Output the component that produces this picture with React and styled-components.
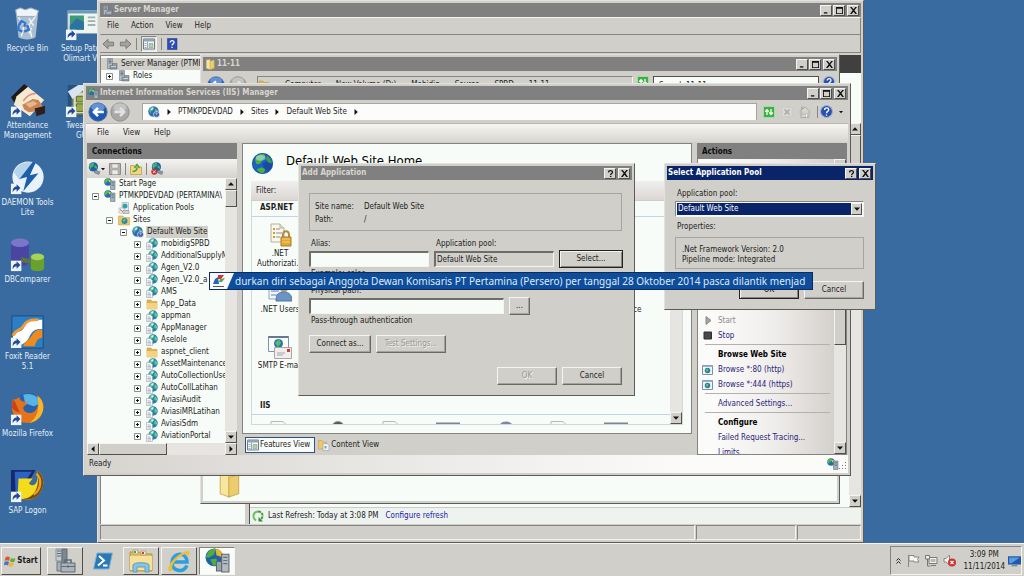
import React from 'react'
import { useState } from 'react'
import styled, { createGlobalStyle, css, ThemeProvider } from 'styled-components'

const theme = {
  desktop: '#396ba0',
  face: '#d1cfc9',
  light: '#f5f4f1',
  shadow: '#858480',
  dark: '#4f4f4c',
  paper: '#f8fcf8',
  caption: '#808080',
  captionText: '#d8d5ce',
  active: '#0a246a',
  text: '#1c1c1c',
  link: '#2a2478',
}

const GlobalStyle = createGlobalStyle`
  * { box-sizing: border-box; }
  html, body, #root { height: 100%; }
  body {
    margin: 0;
    overflow: hidden;
    font-family: 'DejaVu Sans Condensed', 'DejaVu Sans', Tahoma, sans-serif;
    font-size: 8px;
    line-height: 12px;
    color: ${theme.text};
  }
  button, input, select {
    font: inherit;
    color: inherit;
    margin: 0;
    padding: 0;
    border: 0;
    border-radius: 0;
    background: none;
    outline: none;
  }
  svg { display: block; flex: none; }
`

const raised = css`
  border: 1px solid;
  border-color: ${({ theme }) => `${theme.light} ${theme.dark} ${theme.dark} ${theme.light}`};
  background: ${({ theme }) => theme.face};
`

const sunken = css`
  border: 1px solid;
  border-color: ${({ theme }) => `${theme.shadow} ${theme.light} ${theme.light} ${theme.shadow}`};
`

const Screen = styled.div`
  position: relative;
  display: flex;
  flex-direction: column;
  height: 100vh;
  background: ${({ theme }) => theme.desktop};
  overflow: hidden;
`

const Desktop = styled.main`
  position: relative;
  flex: 1;
  min-height: 0;
`

/* desktop shortcuts */

const Shortcuts = styled.div`
  display: grid;
  grid-auto-flow: column;
  grid-template-rows: repeat(7, 77px);
  grid-auto-columns: 55px;
`

const Shortcut = styled.button`
  display: flex;
  flex-direction: column;
  align-items: center;
  justify-content: flex-start;
  padding-top: 6px;
  color: #e6eef6;
  line-height: 10px;
  white-space: pre;
`

const ShortcutIcon = styled.span`
  display: block;
  margin-bottom: 2px;
`

/* windows */

const Window = styled.section`
  position: absolute;
  left: ${({ $x }) => $x}px;
  top: ${({ $y }) => $y}px;
  width: ${({ $w }) => $w}px;
  height: ${({ $h }) => $h}px;
  display: flex;
  flex-direction: column;
  padding: 2px;
  border: 1px solid;
  border-color: #e4e2dd #5c5c5a #5c5c5a #e4e2dd;
  background: ${({ theme }) => theme.face};
`

const TitleBar = styled.header`
  display: flex;
  align-items: center;
  flex: none;
  height: 14px;
  padding: 0 2px 0 ${({ $icon }) => ($icon ? 2 : 1)}px;
  gap: 1px;
  background: ${({ theme, $active }) => ($active ? theme.active : theme.caption)};
  color: ${({ theme, $active }) => ($active ? '#fff' : theme.captionText)};
`

const TitleText = styled.h2`
  flex: 1;
  margin: 0;
  font-size: 8px;
  font-weight: bold;
  white-space: nowrap;
`

const CaptionButton = styled.button`
  ${raised}
  display: flex;
  align-items: center;
  justify-content: center;
  width: 12px;
  height: 11px;
  margin-left: ${({ $gap }) => ($gap ? 1 : 0)}px;
  color: #111;
`

const MenuBar = styled.nav`
  display: flex;
  align-items: center;
  flex: none;
  height: 18px;
  padding-left: 6px;
  gap: 12px;
`

const ServerMenuBar = styled(MenuBar)`
  ${sunken}
  border-color: ${({ theme }) => `${theme.light} ${theme.shadow} ${theme.shadow} ${theme.face}`};
`

const IisMenuBar = styled(MenuBar)`
  padding-left: 11px;
  gap: 14px;
  background: linear-gradient(#f6f5f2, #d9d6d1);
`

const MenuItem = styled.button`
  white-space: nowrap;
`

const ToolBar = styled.div`
  display: flex;
  align-items: center;
  flex: none;
  height: ${({ $h }) => $h || 18}px;
  padding: 0 3px;
  gap: 4px;
`

const ServerToolBar = styled(ToolBar)`
  padding: 0 2px;
  border-bottom: 1px solid ${({ theme }) => theme.shadow};
  border-right: 1px solid ${({ theme }) => theme.shadow};
`

const ToolButton = styled.button`
  display: flex;
  align-items: center;
  ${({ $boxed }) => $boxed && css`
    padding: 1px;
    ${sunken}
    background: #e6e4df;
  `}
`

const Divider = styled.span`
  width: 1px;
  height: 12px;
  background: ${({ theme }) => theme.shadow};
`

/* server manager body */

const ServerBody = styled.div`
  display: flex;
  flex: 1;
  min-height: 0;
  margin-top: 2px;
  gap: 4px;
`

const ServerTree = styled.div`
  flex: none;
  width: 145px;
  padding-top: 2px;
  border: 1px solid ${({ theme }) => theme.shadow};
  border-width: 1px 0 0 1px;
  background: ${({ theme }) => theme.paper};
`

const ServerPane = styled.div`
  display: flex;
  flex-direction: column;
  flex: 1;
  border-left: 1px solid ${({ theme }) => theme.dark};
  background: ${({ theme }) => theme.paper};
`

const ServerPaneHead = styled.div`
  height: 18px;
  margin-bottom: 50px;
  background: #404040;
`

const ServerPaneContent = styled.div`
  display: flex;
  justify-content: flex-end;
  flex: 1;
  min-height: 0;
`

const RefreshBar = styled.div`
  display: flex;
  align-items: center;
  flex: none;
  height: 17px;
  padding-left: 2px;
  gap: 4px;
  border-top: 1px solid #c6ccc6;
  background: #eff3ef;
`

const TextLink = styled.a`
  margin-left: ${({ $bright }) => ($bright ? 3 : 0)}px;
  color: ${({ $bright, theme }) => ($bright ? '#2020a8' : theme.link)};
  text-decoration: none;
`

const StatusCells = styled.div`
  display: grid;
  grid-template-columns: 1fr 100px 64px;
  gap: 1px;
  flex: none;
  height: 15px;
  margin-top: 1px;
`

const StatusCell = styled.div`
  ${sunken}
`

/* scroll bars */

const ScrollTrack = styled.div`
  display: flex;
  flex-direction: ${({ $horizontal }) => ($horizontal ? 'row' : 'column')};
  justify-content: space-between;
  flex: none;
  ${({ $horizontal }) => ($horizontal ? 'height: 12px;' : 'width: 12px;')}
  background: #e6e5e1;
`

const ScrollButton = styled.button`
  ${raised}
  display: flex;
  align-items: center;
  justify-content: center;
  flex: none;
  width: 12px;
  height: 12px;
`

const ScrollThumb = styled.div`
  ${raised}
  flex: none;
  ${({ $horizontal, $size }) => ($horizontal ? `width: ${$size}px;` : `height: ${$size}px;`)}
  ${({ $horizontal }) => ($horizontal ? 'margin-right: auto;' : 'margin-bottom: auto;')}
`

/* explorer */

const ExplorerNav = styled.div`
  display: flex;
  align-items: flex-start;
  flex: none;
  height: 26px;
  padding: 5px 2px 0 4px;
  gap: 4px;
`

const ExplorerAddress = styled.div`
  ${sunken}
  display: flex;
  align-items: center;
  flex: 1;
  height: 18px;
  margin-left: 6px;
  gap: 15px;
  overflow: hidden;
  white-space: nowrap;
`

const ExplorerSearch = styled.input`
  ${sunken}
  width: 166px;
  height: 18px;
  padding-left: 5px;
  border-color: ${({ theme }) => theme.dark};
  background: ${({ theme }) => theme.paper};
`

const ExplorerBody = styled.div`
  display: flex;
  flex-direction: column;
  justify-content: flex-end;
  flex: 1;
  padding: 0 0 3px 14px;
  background: ${({ theme }) => theme.paper};
`

const ExplorerDetails = styled.div`
  display: flex;
  align-items: flex-start;
  height: 32px;
  gap: 19px;
  svg { align-self: flex-end; }
`

/* iis */

const NavBar = styled.div`
  display: flex;
  align-items: center;
  flex: none;
  height: 24px;
  padding: 0 5px 0 2px;
  gap: 2px;
  border-bottom: 1px solid #b9b8b3;
`

const NavTools = styled.div`
  display: flex;
  align-items: center;
  gap: 6px;
  margin-left: 4px;
`

const AddressBar = styled.div`
  display: flex;
  align-items: center;
  flex: 1;
  height: 17px;
  margin-left: 10px;
  padding-left: 5px;
  gap: 6px;
  border: 1px solid #a5a5a2;
  border-width: 1px 1px 0 1px;
  background: #fcfdfb;
  white-space: nowrap;
`

const IisBody = styled.div`
  display: grid;
  grid-template-columns: 150px 1fr 150px;
  grid-template-rows: minmax(0, 1fr);
  column-gap: 5px;
  flex: 1;
  min-height: 0;
  padding: 1px 1px 0;
`

const Pane = styled.div`
  display: flex;
  flex-direction: column;
  min-width: 0;
  min-height: 0;
`

const PaneTitle = styled.h3`
  flex: none;
  height: 16px;
  margin: 0;
  padding: 2px 5px;
  background: ${({ theme }) => theme.caption};
  color: #0c0c0c;
  font-size: 8px;
  line-height: 13px;
`

const PaneTools = styled(ToolBar)`
  gap: 4px;
  padding: 0 1px;
  background: linear-gradient(#f4f3f1, #d6d3ce);
`

const TreeArea = styled.div`
  display: flex;
  flex: 1;
  min-height: 0;
  background: ${({ theme }) => theme.paper};
`

const TreeList = styled.ul`
  flex: 1;
  min-width: 0;
  margin: 0;
  padding: 0;
  overflow: hidden;
  list-style: none;
`

const TreeRow = styled.li`
  display: flex;
  align-items: center;
  height: 12px;
  padding-left: ${({ $level }) => 5 + $level * 14}px;
  white-space: nowrap;
  ${({ $wide, theme }) => $wide && `background: ${theme.face};`}
`

const Expander = styled.button`
  display: flex;
  flex: none;
  width: 12px;
  visibility: ${({ $empty }) => ($empty ? 'hidden' : 'visible')};
`

const TreeLabel = styled.span`
  padding: 0 1px;
  margin-left: 2px;
  background: ${({ $selected, theme }) => ($selected ? theme.face : 'transparent')};
`

const Features = styled.div`
  display: flex;
  flex-direction: column;
  flex: 1;
  min-height: 0;
  padding: 8px;
  border: 1px solid ${({ theme }) => theme.shadow};
  background: ${({ theme }) => theme.paper};
`

const FeaturesHead = styled.div`
  display: flex;
  align-items: flex-start;
  flex: none;
  height: 29px;
  gap: 12px;
`

const PageTitle = styled.h1`
  margin: 0;
  font-size: 13px;
  line-height: 18px;
  font-weight: normal;
  color: #000;
`

const FilterBar = styled.div`
  flex: none;
  height: 20px;
  padding: 4px 5px;
  border-bottom: 1px solid #cfcdca;
  background: linear-gradient(#f1efee, #dad7d3);
`

const FeatureArea = styled.div`
  display: flex;
  flex: 1;
  min-height: 0;
  border: 1px solid #d4d8d8;
  border-top: 0;
`

const FeatureList = styled.div`
  flex: 1;
  overflow: hidden;
`

const GroupTitle = styled.h4`
  height: 16px;
  margin: 0;
  padding: 1px 8px;
  border-bottom: 1px solid #c3d4e6;
  font-size: 8px;
`

const FeatureGrid = styled.div`
  display: grid;
  grid-template-columns: repeat(7, 56px);
  grid-auto-rows: 56px;
  padding: 6px 0 8px;
`

const Feature = styled.button`
  display: flex;
  flex-direction: column;
  align-items: center;
  justify-content: flex-start;
  gap: 2px;
  line-height: 10px;
  white-space: pre;
`

const ViewTabs = styled.div`
  display: flex;
  align-items: center;
  flex: none;
  height: 21px;
  padding-left: 3px;
  gap: 2px;
`

const ViewTab = styled.button`
  display: flex;
  align-items: center;
  height: 16px;
  gap: 1px;
  padding: 0 4px 0 1px;
  ${({ $active }) => $active && `
    border: 1px solid #34507c;
    background: #f8fcf8;
  `}
`

const ActionsArea = styled.div`
  display: flex;
  flex: 1;
  min-height: 0;
  border: 1px solid ${({ theme }) => theme.shadow};
  border-top: 0;
  background: linear-gradient(90deg, #fbfbfa 10%, #f0eeec 50%, #cfcac6);
`

const ActionList = styled.div`
  flex: 1;
  min-width: 0;
  padding: 7px 4px 0;
  overflow: hidden;
  white-space: nowrap;
`

const ActionRow = styled.div`
  display: grid;
  grid-template-columns: 12px 1fr;
  align-items: center;
  column-gap: 4px;
  height: 15px;
`

const ActionHeading = styled.strong`
  grid-column: 2;
  color: #000;
`

const ActionLink = styled(TextLink)`
  grid-column: 2;
  grid-row: 1;
  color: ${({ $disabled, theme }) => ($disabled ? '#8d8c8a' : theme.link)};
`

const ActionRule = styled.hr`
  height: 1px;
  margin: 1px 0 2px 3px;
  border: 0;
  background: #b3b1ae;
`

const IisStatus = styled.footer`
  display: flex;
  align-items: center;
  justify-content: space-between;
  flex: none;
  height: 18px;
  padding: 0 1px 0 3px;
  background: linear-gradient(90deg, #d6d3cf, #efedeb 50%, #fbfcfa 80%);
`

const StatusIcons = styled.span`
  display: flex;
  align-items: flex-end;
`

/* dialogs */

const DialogBody = styled.div`
  flex: 1;
  display: flex;
  flex-direction: column;
  padding: 13px 10px 8px 8px;
`

const PoolBody = styled(DialogBody)`
  padding: 8px 9px 8px 8px;
`

const InfoBox = styled.dl`
  display: grid;
  grid-template-columns: auto 1fr;
  column-gap: 10px;
  margin: 0 0 7px;
  padding: 6px 5px;
  height: 38px;
  border: 1px solid #a6a5a1;
  line-height: 13px;
  dt, dd { margin: 0; }
`

const PoolInfo = styled.div`
  height: 32px;
  margin: 4px 0 12px;
  padding: 7px 6px;
  border: 1px solid #a6a5a1;
  line-height: 10px;
`

const AliasGrid = styled.div`
  display: grid;
  grid-template-columns: 120px 120px 1fr;
  column-gap: 5px;
  align-items: center;
`

const FieldLabel = styled.label`
  display: block;
  padding: 0 2px;
  white-space: nowrap;
`

const Hint = styled(FieldLabel)`
  margin-bottom: 5px;
`

const TextBox = styled.input`
  width: 100%;
  height: 16px;
  padding: 0 1px;
  border: 1px solid;
  border-width: 2px 1px 1px 2px;
  border-color: #6e6d6a ${({ theme }) => theme.light} ${({ theme }) => theme.light} #6e6d6a;
  background: ${({ readOnly, theme }) => (readOnly ? theme.face : theme.paper)};
`

const PathRow = styled.div`
  display: flex;
  align-items: center;
  gap: 5px;
  width: 221px;
`

const PushButton = styled.button`
  ${raised}
  flex: none;
  width: ${({ $w }) => $w || 60}px;
  height: 18px;
  border-right-color: #6a6967;
  border-bottom-color: #6a6967;
  box-shadow: inset -1px -1px 0 #a3a29e;
  ${({ $primary }) => $primary && 'border: 1px solid #222; box-shadow: inset 1px 1px 0 #f5f4f1, inset -1px -1px 0 #858480;'}
  &:disabled {
    color: #9a9996;
    text-shadow: 1px 1px 0 #f2f1ee;
  }
`

const ButtonRow = styled.div`
  display: flex;
  justify-content: ${({ $end }) => ($end ? 'flex-end' : 'flex-start')};
  gap: 5px;
  margin-top: ${({ $end }) => ($end ? 'auto' : '8px')};
`

const Combo = styled.div`
  ${sunken}
  display: flex;
  height: 16px;
  margin: 1px 0 4px;
  padding: 1px;
  background: ${({ theme }) => theme.paper};
`

const ComboSelect = styled.select`
  appearance: none;
  flex: 1;
  padding: 0 1px;
  background: ${({ theme }) => theme.active};
  color: #fff;
`

const ComboArrow = styled.span`
  ${raised}
  display: flex;
  align-items: center;
  justify-content: center;
  width: 11px;
`

/* ticker */

const Ticker = styled.div`
  position: absolute;
  left: 209px;
  top: 272px;
  display: flex;
  align-items: center;
  width: 604px;
  height: 18px;
  gap: 1px;
  border: 1px solid #0b2c5c;
  background: #0e4d9b;
  color: #dfeaf6;
  overflow: hidden;
  white-space: nowrap;
  font-family: 'Noto Sans', Verdana, sans-serif;
  font-size: 10px;
`

/* taskbar */

const TaskBar = styled.footer`
  display: flex;
  align-items: center;
  flex: none;
  height: 33px;
  padding: 1px 2px 0 1px;
  border-top: 1px solid ${({ theme }) => theme.light};
  background: ${({ theme }) => theme.face};
`

const StartButton = styled.button`
  ${raised}
  display: flex;
  align-items: center;
  justify-content: center;
  gap: 1px;
  width: 40px;
  height: 28px;
  margin-right: 6px;
  font-weight: bold;
`

const TaskButton = styled.button`
  ${({ $flat }) => ($flat ? 'border: 1px solid transparent;' : raised)}
  ${({ $pressed }) => $pressed && css`
    ${sunken}
    background: #fafcfa;
  `}
  display: flex;
  align-items: center;
  justify-content: center;
  width: 36px;
  height: 28px;
  margin-right: 2px;
`

const Tray = styled.div`
  ${sunken}
  display: flex;
  align-items: center;
  gap: 5px;
  height: 29px;
  margin-left: auto;
  padding: 0 0 0 4px;
`

const Clock = styled.time`
  margin-left: 3px;
  margin-right: -2px;
  text-align: center;
  line-height: 12px;
`

/* drawings */

const Arrow = ({ dir = 'down', size = 6 }) => {
  const paths = {
    down: 'M0 1.5h6L3 4.8z',
    up: 'M0 4.5h6L3 1.2z',
    left: 'M4.5 0v6L1.2 3z',
    right: 'M1.5 0v6L4.8 3z',
  }
  return (
    <svg width={size} height={size} viewBox="0 0 6 6"><path d={paths[dir]} fill="#111" /></svg>
  )
}

const Globe = ({ size = 12 }) => (
  <svg width={size} height={size} viewBox="0 0 24 24">
    <circle cx="12" cy="12" r="11" fill="#1e5fc0" />
    <path d="M4 8c2-5 6-7 10-6l1 3-3 3-2 4-4 1z" fill="#4fae3c" />
    <path d="M12 12l5-3 5 1v5l-4 5-4-2z" fill="#1a4aa8" />
    <path d="M6 18l5-2 4 2-2 4c-3 0-5-1-7-4z" fill="#46b43a" />
    <path d="M17 4l4 4 1 4-4-1-3-4z" fill="#3e9e4a" />
    <ellipse cx="10" cy="6" rx="5" ry="3" fill="#b4e6f4" opacity=".6" />
    <circle cx="12" cy="12" r="10.5" fill="none" stroke="#164a82" opacity=".5" />
  </svg>
)

const Server = ({ size = 12, w }) => (
  <svg width={w || size} height={size} viewBox="0 0 24 24">
    <path d="M3 1h10v20H3z" fill="#b4bcc4" stroke="#5f6a76" />
    <path d="M5 4h6M5 7h6M5 10h6" stroke="#4c5866" strokeWidth="1.4" />
    <path d="M13 11h9v11H8v-7h5z" fill="#8e9aa6" stroke="#57626e" />
    <path d="M10 17h10" stroke="#d8dee4" strokeWidth="1.5" />
  </svg>
)

const ServerGlobe = ({ size = 12 }) => (
  <svg width={size} height={size} viewBox="0 0 24 24">
    <circle cx="8" cy="8" r="7.5" fill="#1f71b5" />
    <path d="M1 7c2-6 7-7 9-6l-1 5-4 2-1 4z" fill="#5cb94a" />
    <path d="M9 3l5 2 1 5-5-2z" fill="#e8c53a" />
    <path d="M13 6h9v17h-9z" fill="#a5b0b8" stroke="#56626c" />
    <path d="M15 9h5M15 12h5M15 15h5" stroke="#3f7f8c" strokeWidth="1.3" />
  </svg>
)

const SiteGlobe = ({ size = 12 }) => (
  <svg width={size} height={size} viewBox="0 0 24 24">
    <circle cx="11" cy="11" r="10.5" fill="#2a6db2" />
    <path d="M2 8c3-6 8-7 10-6l-1 6-5 3-1 5zM14 5l6 4-1 4-5-3z" fill="#5db796" />
    <path d="M5 6l4-3 2 2-4 3z" fill="#d8f0f8" />
    <circle cx="17" cy="17" r="6" fill="#3c5fa8" stroke="#e6eef8" strokeWidth="1.4" />
    <path d="M15 15c1-2 4-1 3 1l-1 1v1M17 20v1" stroke="#fff" strokeWidth="1.4" fill="none" />
  </svg>
)

const AppIcon = () => (
  <svg width="12" height="12" viewBox="0 0 24 24">
    <circle cx="14" cy="10" r="9.5" fill="#2b83a6" />
    <path d="M6 8c2-6 7-7 9-6l-1 6-4 2v4zM18 4l5 5-2 5-5-3z" fill="#5cc79c" />
    <path d="M10 4l5-2v3l-3 3z" fill="#e2f6f0" />
    <path d="M1 9h8l4 4v10H1z" fill="#f6f8fa" stroke="#8b959e" />
    <path d="M3 14h6M3 17h7M3 20h7" stroke="#92a0ac" strokeWidth="1.4" />
  </svg>
)

const Folder = ({ size = 12 }) => (
  <svg width={size} height={size} viewBox="0 0 24 24">
    <path d="M2 4h8l2 3h10v15H2z" fill="#e0b04a" stroke="#c0943a" />
    <path d="M2 10h20v12H2z" fill="#f4d27e" />
  </svg>
)

const SitesIcon = () => (
  <svg width="12" height="12" viewBox="0 0 24 24">
    <path d="M1 4h9l2 3h11v15H1z" fill="#ecc968" stroke="#bf9a3f" />
    <circle cx="13" cy="14" r="6" fill="#2d87b0" />
    <path d="M9 13l4-4 2 3-3 4z" fill="#6dca6a" />
  </svg>
)

const PoolsIcon = () => (
  <svg width="12" height="12" viewBox="0 0 24 24">
    <path d="M8 1h13v16H8z" fill="#e9eef0" stroke="#8c979e" />
    <circle cx="14" cy="8" r="5" fill="#35a1a4" />
    <path d="M2 12h10v10H2z" fill="#f4f6f8" stroke="#8c979e" />
    <path d="M10 17h12v6H10z" fill="#c8d2d8" stroke="#7d8a92" />
    <path d="M4 15l5 4" stroke="#c14b4b" strokeWidth="2" />
  </svg>
)

const OpenFolder = ({ size = 12 }) => (
  <svg width={size} height={size} viewBox="0 0 24 24">
    <path d="M3 2l8-1v22l-8-3z" fill="#f7e6a0" stroke="#d3b45a" />
    <path d="M11 5l9-3v18l-9 3z" fill="#eccc6c" stroke="#cfae54" />
  </svg>
)

const PlusBox = ({ open }) => (
  <svg width="7" height="7" viewBox="0 0 7 7">
    <path d="M.5 .5h6v6h-6z" fill="#fbfdfb" stroke="#8d8d8b" />
    <path d={open ? 'M2 3.5h3' : 'M2 3.5h3M3.5 2v3'} stroke="#111" />
  </svg>
)

const Round = ({ size = 18, blue, flip }) => (
  <svg width={size} height={size} viewBox="0 0 24 24">
    <circle cx="12" cy="12" r="11" fill={blue ? '#1c58b4' : '#a8a8a6'} stroke={blue ? '#5f6f8c' : '#8a8a88'} />
    <ellipse cx="12" cy="6.5" rx="8" ry="5" fill={blue ? '#7eaee8' : '#cfcfcd'} opacity=".7" />
    <path d={flip ? 'M5 12h12M12 7l5 5-5 5' : 'M19 12H7M12 7l-5 5 5 5'} stroke={blue ? '#fff' : '#e2e2e0'} strokeWidth="3" fill="none" />
  </svg>
)

const FatArrow = ({ flip }) => (
  <svg width="13" height="12" viewBox="0 0 14 12">
    <path d={flip ? 'M13 6L7.5 1v3H1.5v4h6v3z' : 'M1 6l5.5-5v3h6v4h-6v3z'} fill="#a3a3a0" stroke="#767674" />
  </svg>
)

const HelpIcon = ({ square, size = 12 }) => (
  <svg width={size} height={size} viewBox="0 0 24 24">
    {square
      ? <path d="M3 1h19v22H3z" fill="#2c4cb4" stroke="#16307c" />
      : <circle cx="12" cy="12" r="11" fill="#2a50ae" stroke="#9db1dc" strokeWidth="2" />}
    <path d="M8.5 9c0-5 8-5 7.5 0 0 3-4 2.5-4 6M12 17.5v2.5" stroke="#fff" strokeWidth="2.5" fill="none" />
  </svg>
)

const GridIcon = () => (
  <svg width="12" height="12" viewBox="0 0 24 24">
    <path d="M1 2h22v20H1z" fill="#f6f8f8" stroke="#6b7c90" strokeWidth="2" />
    <path d="M1 2h22v5H1z" fill="#8fa3ba" />
    <path d="M9 7v15M3 11h4M3 15h4M3 19h4" stroke="#7a8ba0" strokeWidth="1.5" />
    <path d="M12 11h8v8h-8z" fill="#b5cbb2" stroke="#74906f" />
  </svg>
)

const RefreshIcon = () => (
  <svg width="12" height="12" viewBox="0 0 24 24">
    <path d="M1 1h22v22H1z" fill="#3fae46" stroke="#a4dca4" strokeWidth="2" />
    <path d="M8 18V8M4.5 11.5L8 7.5l3.5 4M16 6v10M12.5 13l3.5 4 3.5-4" stroke="#fff" strokeWidth="2.5" fill="none" />
  </svg>
)

const RefreshRing = () => (
  <svg width="12" height="12" viewBox="0 0 24 24">
    <path d="M8 21C-1 15 3 3 12 3" stroke="#6cc25c" strokeWidth="4" fill="none" />
    <path d="M12 3c10 0 12 11 5 16" stroke="#3f9e3a" strokeWidth="4" fill="none" strokeDasharray="6 1.5" />
    <path d="M13 14v9h9z" fill="#2e8f2e" />
  </svg>
)

const StopIcon = () => (
  <svg width="12" height="12" viewBox="0 0 24 24">
    <path d="M2 3h20v18H2z" fill="#dcdad6" stroke="#c2c0bc" />
    <path d="M7 7l10 10M17 7L7 17" stroke="#aaa8a5" strokeWidth="3" />
  </svg>
)

const HomeIcon = () => (
  <svg width="12" height="12" viewBox="0 0 24 24">
    <path d="M1 12L12 2l11 10M4 11v12h16V11M5 8V2h3v4" fill="#d7d5d1" stroke="#a09e9b" strokeWidth="1.5" />
    <path d="M13 15h4v8h-4zM7 14h3v3H7z" fill="#f4f2ef" stroke="#a09e9b" />
  </svg>
)

const SaveIcon = () => (
  <svg width="12" height="12" viewBox="0 0 24 24">
    <path d="M1 1h22v22H1z" fill="#b5b3b0" stroke="#8d8b88" strokeWidth="2" />
    <path d="M6 2h12v8H6zM6 14h12v9H6z" fill="#ecebe8" stroke="#9b9996" />
  </svg>
)

const UpFolder = () => (
  <svg width="12" height="12" viewBox="0 0 24 24">
    <path d="M1 5h8l2 3h12v15H1z" fill="#f1d67c" stroke="#bd9c48" strokeWidth="1.5" />
    <path d="M5 17c6 0 9-4 9-8M9 10l5-7 5 7" stroke="#4aa53e" strokeWidth="3" fill="none" />
  </svg>
)

const ConnectIcon = ({ remove }) => (
  <svg width="13" height="13" viewBox="0 0 24 24">
    <circle cx="10" cy="9" r="8.5" fill="#1d639e" />
    <path d="M2 8c2-6 7-7 9-6l-1 6-4 2-1 4zM12 5l5 4-1 4-4-3z" fill="#49b274" />
    <path d="M13 15l9 3-2 5-8-3z" fill="#8d9ca8" stroke="#55626e" />
    {remove && <circle cx="6" cy="18" r="5.5" fill="#cc2e2a" />}
    {remove && <path d="M3.5 15.5l5 5M8.5 15.5l-5 5" stroke="#fff" strokeWidth="1.5" />}
  </svg>
)

const BrowseIcon = () => (
  <svg width="11" height="10" viewBox="0 0 22 20">
    <path d="M1 1h20v18H1z" fill="#f2f6f8" stroke="#7890aa" strokeWidth="2" />
    <path d="M1 1h20v3H1z" fill="#9ab2cc" />
    <circle cx="11" cy="11" r="5.5" fill="#2a7f92" />
    <path d="M7 10l4-3 2 3-3 4z" fill="#65c089" />
  </svg>
)

const AuthIcon = () => (
  <svg width="24" height="24" viewBox="0 0 24 24">
    <path d="M3 1h9l4 4v14H3z" fill="#f9f7ee" stroke="#b4b09c" />
    <path d="M12 1v4h4" fill="#e6e2cc" stroke="#b4b09c" />
    <path d="M5 6h2M5 10h2M5 14h2" stroke="#d19a2e" strokeWidth="2" />
    <path d="M8 6h4M8 10h6M8 14h4" stroke="#8f8f98" />
    <path d="M15 15v-3c0-5 6-5 6 0v3" fill="none" stroke="#b08c3c" strokeWidth="2" />
    <path d="M13 14h10v9H13z" fill="#dfa934" stroke="#a87c22" />
    <path d="M14 16h8M14 19h8" stroke="#f4cf76" />
  </svg>
)

const UsersIcon = () => (
  <svg width="24" height="24" viewBox="0 0 24 24">
    <path d="M1 2h13v18H1z" fill="#f2f5f8" stroke="#94a4b8" />
    <path d="M3 8h8M3 12h8M3 16h8" stroke="#5b82ba" />
    <circle cx="16" cy="9" r="4" fill="#c69a68" />
    <path d="M8 22c0-7 3-9 8-9s8 3 8 9z" fill="#6994c4" stroke="#4f77a6" />
  </svg>
)

const MailIcon = () => (
  <svg width="24" height="24" viewBox="0 0 24 24">
    <path d="M.5 1.5h20v15H.5z" fill="#fafcfc" stroke="#8492a8" />
    <path d="M.5 1h20v2H.5z" fill="#66788f" />
    <circle cx="10.500" cy="8.500" r="4.500" fill="#2678a8" />
    <path d="M7 8l4-4 2 4-3 4z" fill="#58bb6c" />
    <path d="M6.5 12.500h17v11h-17z" fill="#f1eeec" stroke="#a9a5a2" />
    <path d="M9 18h8M9 20h6" stroke="#a0a5b4" />
    <path d="M19 14h3v3h-3z" fill="#cf3b36" />
  </svg>
)

const PeekIcon = ({ kind }) => (
  <svg width="24" height="24" viewBox="0 0 24 24">
    {kind === 'page' && <path d="M3 .5h12l5 5v18H3z" fill="#f8f8f4" stroke="#b9b8ae" />}
    {kind === 'globe' && <circle cx="14" cy="7" r="6.5" fill="#5a5654" stroke="#9a9896" />}
    {kind === 'disc' && <circle cx="14" cy="9" r="7" fill="#d8dae8" stroke="#7f84a6" strokeWidth="3" />}
    {kind === 'box' && <path d="M1 2.5h22v20H1z" fill="#d8dde4" stroke="#7c8590" strokeWidth="2" />}
  </svg>
)

const ContentIcon = () => (
  <svg width="12" height="12" viewBox="0 0 24 24">
    <path d="M1 3h7l2 3h7v14H1z" fill="#edc968" stroke="#c0993f" />
    <path d="M10 9h8l4 4v10H10z" fill="#eef2f6" stroke="#7f90a6" />
    <path d="M13 14h4v5h-4z" fill="#7fa0c8" />
  </svg>
)

const Grip = () => (
  <svg width="8" height="8" viewBox="0 0 8 8">
    <path d="M6 0h1v1H6zM3 3h1v1H3zM6 3h1v1H6zM0 6h1v1H0zM3 6h1v1H3zM6 6h1v1H6z" fill="#777" />
  </svg>
)

const Link = () => (
  <g>
    <path d="M1 24h11v11H1z" fill="#eef4fa" />
    <path d="M3 33c-1-4 2-6 4-6v-2.5l4 4-4 4V30c-2 0-3 1-4 3z" fill="#1f4a94" />
  </g>
)

const drawings = {
  recycle: (
    <>
      <path d="M6 4l24 0-3 28c-4 3-14 3-18 0z" fill="#b9c9d6" opacity=".9" />
      <path d="M6 3l5-2 5 2 6-2 8 3-2 6-21 0z" fill="#eff4f7" stroke="#9aaab8" />
      <path d="M9 11l6 8-3 12M27 10l-7 9 3 13M20 12l5 8M23 22l-3 6" stroke="#eef4f8" strokeWidth="1.500" fill="none" />
      <path d="M9 20l3-5 4 2-1 4M18 19l2 5-5 2M13 26l-4-2 0-4" stroke="#3377cc" strokeWidth="2.500" fill="none" />
    </>
  ),
  setup: (
    <>
      <path d="M3 4h34v24H3z" fill="#eef4ee" stroke="#8fa8b4" />
      <path d="M3 4h34v3H3z" fill="#6c9cbc" />
      <path d="M5 9h15v15H5z" fill="#3f9a78" />
      <path d="M5 20l7-8 8 4v8H5z" fill="#2b74a0" />
      <path d="M24 11h8M24 15h8M24 19h8" stroke="#9cb0b8" strokeWidth="2" />
      <Link />
    </>
  ),
  attendance: (
    <>
      <path d="M1 14L15 0l8 6L6 22z" fill="#1d1a18" />
      <path d="M7 13L19 3l17 14-15 17L4 22z" fill="#f4ead0" />
      <path d="M14 18c4-6 9-8 13-8" stroke="#e08a7c" strokeWidth="1.500" fill="none" />
      <path d="M13 22l11-6 6 1 5 7-3 4-12 2-5-3z" fill="#c98458" />
      <path d="M26 26l11-3v8l-9 3z" fill="#2a211c" />
      <path d="M16 21l9-3 4 3-8 4z" fill="#e8b48a" />
      <Link />
    </>
  ),
  tweak: (
    <>
      <path d="M3 1h32v33H3z" fill="#24527e" />
      <path d="M8 8h24v24H8z" fill="#d4dcc0" stroke="#6c7858" strokeWidth="2" />
      <path d="M12 13h8v6h-8zM22 13h8v6h-8zM12 21h8v8h-8z" fill="#9aab4a" stroke="#57632c" />
      <path d="M3 8L14 1h12L8 16z" fill="#d9e4ee" />
      <Link />
    </>
  ),
  daemon: (
    <>
      <circle cx="19" cy="17" r="16.5" fill="#e8f2fb" />
      <path d="M4 12C8 2 18 0 25 2L10 20z" fill="#a9cbe8" opacity=".8" />
      <path d="M24 1L10 19l8-2-4 15 16-19-9 2 6-13z" fill="#1d5eac" />
      <Link />
    </>
  ),
  compare: (
    <>
      <path d="M1 5v21c0 5 19 5 19 0V5z" fill="#4b45a2" />
      <ellipse cx="10.5" cy="5" rx="9.5" ry="4.500" fill="#7a76cc" />
      <path d="M12 20l12 3v5l-12-3z" fill="#57744a" />
      <path d="M22 20v12c0 4 14 4 14 0V20z" fill="#6aa02c" />
      <ellipse cx="29" cy="20" rx="7" ry="3.500" fill="#a6d458" />
      <Link />
    </>
  ),
  foxit: (
    <>
      <path d="M2 1h33v34H2z" fill="#2b7fc4" stroke="#1d4c7c" />
      <path d="M3 24c2-9 9-4 12-11 3-8 9-8 19-8v10c-9-1-11 3-14 9-4 7-9 8-17 9z" fill="#fff" />
      <path d="M14 33c2-6 5-5 9-11 3-6 7-7 11-6v8c-5 0-6 4-8 9z" fill="#f08a1c" />
      <path d="M3 22c3-7 8-5 11-10 4-7 9-7 16-7" stroke="#f39a30" strokeWidth="3" fill="none" />
      <Link />
    </>
  ),
  firefox: (
    <>
      <circle cx="19" cy="17" r="16" fill="#2563ae" />
      <path d="M14 3c8-3 17 2 19 9l-8 3-9-3z" fill="#58b4e4" />
      <path d="M3 8c3 0 4-1 7-3 0 3 1 4 4 5l5 2-4 3c-2 1-1 6 4 7 5 1 9-2 10-7 2-5 1-9-1-12 8 5 10 15 4 23-7 9-21 9-27 0C2 21 1 14 3 8z" fill="#e4731c" />
      <path d="M29 4c7 5 8 15 3 22-3 4-7 6-12 7 8-5 12-14 9-29z" fill="#f7b52c" />
      <path d="M3 8c4 3 4 9 8 14-5-1-8-3-9-6z" fill="#c84418" />
      <Link />
    </>
  ),
  sap: (
    <>
      <path d="M1 1h26L8 34H1z" fill="#14296e" />
      <path d="M5 3h18L6 28z" fill="#2d62c0" />
      <path d="M9 10h15l-4 5c4 5 11 2 9-13 9 6 8 22-2 28-6 4-14 3-19 0z" fill="#f2dc1c" />
      <path d="M29 2c9 6 8 22-2 28-5 3-11 3-15 2 12-1 20-9 17-30z" fill="#7c4a16" />
      <path d="M28 5c6 6 5 17-3 22" stroke="#e8a41c" strokeWidth="2.500" fill="none" />
      <Link />
    </>
  ),
}

const StartFlag = () => (
  <svg width="12" height="12" viewBox="0 0 24 24">
    <path d="M3 5c3-3 6-2 9 0l-2 7c-3-2-6-2-9 0z" fill="#e0562c" />
    <path d="M14 6c3 2 6 2 9 0l-2 7c-3 2-6 2-9 0z" fill="#5fae3a" />
    <path d="M1 14c3-2 6-2 9 0l-2 7c-3-2-5-2-8 0z" fill="#3a78c8" />
    <path d="M11 15c3 2 6 2 9 0l-2 7c-3 2-6 2-9 0z" fill="#f0b82a" />
  </svg>
)

const ServerTask = () => (
  <svg width="24" height="26" viewBox="0 0 24 26">
    <path d="M3 1h6v12H3z" fill="#c4ccd2" stroke="#8a949c" />
    <path d="M4 3h4M4 5.500h4M4 8h4" stroke="#5f6a74" />
    <path d="M9 1h5v15H9z" fill="#7c8790" stroke="#626c75" />
    <path d="M4 14h7v9H4z" fill="#a8b1b8" stroke="#6a747e" />
    <path d="M8 15h14v9H8z" fill="#aab4bc" stroke="#5f6a74" />
    <path d="M12 15v-3h6v3" fill="none" stroke="#5f6a74" strokeWidth="1.500" />
    <path d="M8 18.500h14M15 17v3" stroke="#5f6a74" />
  </svg>
)

const PowerShell = () => (
  <svg width="20" height="18" viewBox="0 0 20 18">
    <path d="M4 1h15.5L16 17H.5z" fill="#2a79b6" stroke="#79b4dc" />
    <path d="M6 4l5 4.500-6 5M10 13.500h4.500" stroke="#fff" strokeWidth="2" fill="none" />
  </svg>
)

const ExplorerTask = () => (
  <svg width="24" height="24" viewBox="0 0 24 24">
    <path d="M1 3h9l2 2h11v17H1z" fill="#e2bd56" stroke="#b8943c" />
    <path d="M4 1h5v4H4zM12 2h5v4h-5z" fill="#f4f2e6" stroke="#b1a47c" />
    <path d="M5 2h2v2H5z" fill="#4aa048" />
    <path d="M13 3h2v2h-2z" fill="#c4443a" />
    <path d="M1 7h22v14H1z" fill="#f6e09a" />
    <path d="M4 23v-7c0-3 16-3 16 0v7h-4v-5H8v5z" fill="#86c4e6" stroke="#5c9cc4" />
  </svg>
)

const IeTask = () => (
  <svg width="24" height="24" viewBox="0 0 24 24">
    <path d="M20 16.500c-4 8-15 6-15-3.500S20 2 20 13H7" fill="none" stroke="#2e9fdc" strokeWidth="3.500" />
    <path d="M2 22C-2 17 13 2 21 2c3 1 1 4 0 6 0-3-1-4-5-2C8 10 3 18 6 21c-2 1-3 2-4 1z" fill="#f0bc34" />
  </svg>
)

const IisTask = () => (
  <svg width="25" height="25" viewBox="0 0 24 24">
    <circle cx="9" cy="9" r="8.5" fill="#1e62ae" />
    <path d="M1 9C2 3 7 0 10 1l-1 5-5 3zM5 11l6-1 1 6-4 1z" fill="#54ac3c" />
    <path d="M10 1c5 0 8 4 7 8l-6-2z" fill="#e8b62c" />
    <path d="M11 13h6v9h-6z" fill="#9aa4ac" stroke="#5a646c" />
    <path d="M16 6h7v17h-7z" fill="#b4bcc2" stroke="#5a646c" />
    <path d="M17.5 9h4M17.5 12h4M17.5 15h4" stroke="#66727c" />
  </svg>
)

const FlagIcon = () => (
  <svg width="13" height="13" viewBox="0 0 13 13">
    <path d="M1.5 1v12" stroke="#888" />
    <path d="M2 1.500h5v1.500h5l-1.500 2.500 1.500 2.500H7V7H2z" fill="#f8f8f6" stroke="#888" />
  </svg>
)

const NetIcon = () => (
  <svg width="13" height="13" viewBox="0 0 13 13">
    <path d="M4 3.500h8v6H4z" fill="#f4f4f2" stroke="#777" />
    <path d="M5.500 5h5v3h-5z" fill="#b8b8b6" />
    <path d="M6 11.500h5M2.500 5v7h3" stroke="#777" fill="none" />
    <path d="M.5 1.500h4V5h-4z" fill="#eee" stroke="#777" />
  </svg>
)

const MuteIcon = () => (
  <svg width="13" height="13" viewBox="0 0 13 13">
    <path d="M1 4.500h2L6.500 1v10L3 8H1z" fill="#f2f2f0" stroke="#888" />
    <circle cx="9" cy="8.500" r="4" fill="#d2322c" />
    <path d="M7.500 7l3 3M10.500 7l-3 3" stroke="#fff" strokeWidth="1.200" />
  </svg>
)

const Chevrons = () => (
  <svg width="7" height="8" viewBox="0 0 7 8">
    <path d="M1.500 3.500l2-2 2 2M1.500 6.500l2-2 2 2" stroke="#222" fill="none" />
  </svg>
)

const ShowDesktop = () => (
  <svg width="13" height="12" viewBox="0 0 11 10">
    <path d="M0 1h11v7H0z" fill="#1e58a8" />
    <path d="M1 2h9L3 7H1z" fill="#5b9be0" />
    <path d="M3 9h5" stroke="#6f7f92" />
  </svg>
)

const TickerLogo = () => (
  <svg width="24" height="16" viewBox="0 0 24 16">
    <path d="M0 0h24l-7 16H0z" fill="#f7f9fb" />
    <path d="M8 2h6l-3 4H8z" fill="#d8303a" />
    <path d="M5 6l3-2 1 7H3z" fill="#2566b4" />
    <path d="M10 6l5-1-3 4H9z" fill="#5aa844" />
    <path d="M3 13.500h11" stroke="#555" />
  </svg>
)

/* data */

const shortcuts = [
  ['recycle', 'Recycle Bin'],
  ['attendance', 'Attendance\nManagement'],
  ['daemon', 'DAEMON Tools\nLite'],
  ['compare', 'DBComparer'],
  ['foxit', 'Foxit Reader\n5.1'],
  ['firefox', 'Mozilla Firefox'],
  ['sap', 'SAP Logon'],
  ['setup', 'Setup Patch\nOlimart V2'],
  ['tweak', 'Tweaking\nGUI'],
]

const siteApps = [
  'mobidigSPBD', 'AdditionalSupplyM', 'Agen_V2.0', 'Agen_V2.0_a', 'AMS', 'App_Data',
  'appman', 'AppManager', 'Aselole', 'aspnet_client', 'AssetMaintenance', 'AutoCollectionUser',
  'AutoCollLatihan', 'AviasiAudit', 'AviasiMRLatihan', 'AviasiSdm', 'AviationPortal',
]

const folders = ['App_Data', 'aspnet_client']

const features = [
  ['.NET\nAuthorizati...', AuthIcon], ['.NET\nCompilation', AuthIcon], ['.NET Error\nPages', AuthIcon],
  ['.NET\nGlobalization', AuthIcon], ['.NET Profile', AuthIcon], ['.NET Roles', AuthIcon], ['.NET Trust\nLevels', AuthIcon],
  ['.NET Users', UsersIcon], ['Application\nSettings', UsersIcon], ['Connection\nStrings', UsersIcon],
  ['Machine Key', UsersIcon], ['Pages', UsersIcon], ['Providers', UsersIcon], ['Web Resource', UsersIcon],
  ['SMTP E-mail', MailIcon],
]

const peeks = ['page', 'globe', 'page', 'box', 'disc', 'page', 'box']

const actions = [
  { label: 'Explore' }, { label: 'Edit Permissions...' }, { rule: true },
  { heading: 'Edit Site' }, { label: 'Bindings...' }, { label: 'Basic Settings...' }, { rule: true },
  { label: 'View Applications' }, { label: 'View Virtual Directories' }, { rule: true },
  { heading: 'Manage Web Site' }, { label: 'Restart' },
  { label: 'Start', icon: 'start', disabled: true }, { label: 'Stop', icon: 'stop' }, { rule: true },
  { heading: 'Browse Web Site' }, { label: 'Browse *:80 (http)', icon: 'browse' },
  { label: 'Browse *:444 (https)', icon: 'browse' }, { rule: true },
  { label: 'Advanced Settings...' }, { rule: true },
  { heading: 'Configure' }, { label: 'Failed Request Tracing...' }, { label: 'Limits...' },
]

/* components */

const glyphs = {
  min: 'M1 6h4v1.500H1z',
  max: 'M0 0h8v8H0zM1 2v5h6V2z',
  close: 'M0 0h2l2 2.500L6 0h2L5 3.800 8 8H6L4 5.300 2 8H0l3-4.200z',
  help: 'M1 2.500C1-.8 7-.8 7 2.500c0 1.800-2 1.800-2 3.200H3.500C3.500 3.500 5.500 3.800 5.500 2.500c0-1.500-3-1.500-3 .3zM3.400 6.500H5V8H3.400z',
}

const Caption = ({ kind, gap }) => (
  <CaptionButton aria-label={kind} $gap={gap}>
    <svg width="7" height="7" viewBox="0 0 8 8"><path d={glyphs[kind]} fill="#111" fillRule="evenodd" /></svg>
  </CaptionButton>
)

const Title = ({ icon, text, dialog, active }) => (
  <TitleBar $icon={!!icon} $active={active}>
    {icon}
    <TitleText>{text}</TitleText>
    {dialog ? <Caption kind="help" /> : <><Caption kind="min" /><Caption kind="max" /></>}
    <Caption kind="close" gap />
  </TitleBar>
)

const Scroll = ({ horizontal, thumb }) => (
  <ScrollTrack $horizontal={horizontal}>
    <ScrollButton aria-label="Scroll back"><Arrow dir={horizontal ? 'left' : 'up'} /></ScrollButton>
    {thumb && <ScrollThumb $horizontal={horizontal} $size={thumb} />}
    <ScrollButton aria-label="Scroll forward"><Arrow dir={horizontal ? 'right' : 'down'} /></ScrollButton>
  </ScrollTrack>
)

const TreeItem = ({ level = 0, icon, label, state, selected, wide, root }) => (
  <TreeRow $level={level} $wide={wide}>
    {!root && <Expander $empty={!state} aria-label={`Toggle ${label}`}><PlusBox open={state === 'open'} /></Expander>}
    {icon}
    <TreeLabel $selected={selected}>{label}</TreeLabel>
  </TreeRow>
)

const ServerManager = () => (
  <Window $x={97} $y={0} $w={767} $h={543}>
    <Title icon={<Server size={11} />} text="Server Manager" />
    <ServerMenuBar>
      {['File', 'Action', 'View', 'Help'].map((m) => <MenuItem key={m}>{m}</MenuItem>)}
    </ServerMenuBar>
    <ServerToolBar>
      <ToolButton aria-label="Back"><FatArrow /></ToolButton>
      <ToolButton aria-label="Forward"><FatArrow flip /></ToolButton>
      <Divider />
      <ToolButton $boxed aria-label="Console tree"><GridIcon /></ToolButton>
      <Divider />
      <ToolButton aria-label="Help"><HelpIcon square /></ToolButton>
    </ServerToolBar>
    <ServerBody>
      <ServerTree>
        <TreeItem root icon={<Server />} label="Server Manager (PTMK" wide />
        <TreeItem icon={<Server />} label="Roles" state="closed" />
      </ServerTree>
      <ServerPane>
        <ServerPaneHead />
        <ServerPaneContent><Scroll thumb={120} /></ServerPaneContent>
        <RefreshBar>
          <RefreshRing />
          <span>Last Refresh: Today at 3:08 PM</span>
          <TextLink href="#refresh" $bright>Configure refresh</TextLink>
        </RefreshBar>
      </ServerPane>
    </ServerBody>
    <StatusCells><StatusCell /><StatusCell /><StatusCell /></StatusCells>
  </Window>
)

const Explorer = () => (
  <Window $x={200} $y={54} $w={640} $h={450}>
    <Title icon={<OpenFolder size={11} />} text="11-11" />
    <ExplorerNav>
      <Round blue />
      <Round flip />
      <ExplorerAddress>
        <Folder />
        {['Computer', 'New Volume (D:)', 'Mobidig', 'Source', 'SPBD', '11-11'].map((p) => <span key={p}>{p}</span>)}
      </ExplorerAddress>
      <RefreshIcon />
      <ExplorerSearch defaultValue="Search 11-11" aria-label="Search" />
      <HelpIcon />
    </ExplorerNav>
    <ExplorerBody>
      <ExplorerDetails>
        <OpenFolder size={26} />
        <span>1 item</span>
      </ExplorerDetails>
    </ExplorerBody>
  </Window>
)

const Connections = () => (
  <Pane>
    <PaneTitle>Connections</PaneTitle>
    <PaneTools $h={19}>
      <ToolButton aria-label="Connect"><ConnectIcon /><Arrow size={4} /></ToolButton>
      <ToolButton aria-label="Save"><SaveIcon /></ToolButton>
      <Divider />
      <ToolButton aria-label="Up"><UpFolder /></ToolButton>
      <Divider />
      <ToolButton aria-label="Disconnect"><ConnectIcon remove /></ToolButton>
    </PaneTools>
    <TreeArea>
      <TreeList>
        <TreeItem level={0} icon={<ServerGlobe />} label="Start Page" />
        <TreeItem level={0} icon={<ServerGlobe />} label="PTMKPDEVDAD (PERTAMINA\" state="open" />
        <TreeItem level={1} icon={<PoolsIcon />} label="Application Pools" />
        <TreeItem level={1} icon={<SitesIcon />} label="Sites" state="open" />
        <TreeItem level={2} icon={<SiteGlobe />} label="Default Web Site" state="open" selected />
        {siteApps.map((app) => (
          <TreeItem key={app} level={3} icon={folders.includes(app) ? <Folder /> : <AppIcon />} label={app} state="closed" />
        ))}
      </TreeList>
      <Scroll thumb={17} />
    </TreeArea>
    <Scroll horizontal thumb={68} />
  </Pane>
)

const ActionIcon = ({ icon }) => {
  if (icon === 'browse') return <BrowseIcon />
  if (icon === 'start') return <svg width="12" height="9" viewBox="0 0 12 9"><path d="M4 .5v8l5-4z" fill="#a5a4a2" stroke="#8b8a88" /></svg>
  if (icon === 'stop') return <svg width="12" height="9" viewBox="0 0 12 9"><path d="M2 1h7.500v7H2z" fill="#484848" stroke="#303030" /></svg>
  return null
}

const Actions = () => (
  <Pane>
    <PaneTitle>Actions</PaneTitle>
    <ActionsArea>
      <ActionList>
        {actions.map((a, i) => {
          if (a.rule) return <ActionRule key={i} />
          return (
            <ActionRow key={i}>
              <ActionIcon icon={a.icon} />
              {a.heading
                ? <ActionHeading>{a.heading}</ActionHeading>
                : <ActionLink href="#action" $disabled={a.disabled}>{a.label}</ActionLink>}
            </ActionRow>
          )
        })}
      </ActionList>
      <Scroll thumb={174} />
    </ActionsArea>
  </Pane>
)

const IisManager = () => {
  const [view, setView] = useState('features')
  return (
    <Window $x={83} $y={83} $w={768} $h={393}>
      <Title icon={<ServerGlobe size={11} />} text="Internet Information Services (IIS) Manager" />
      <NavBar>
        <ToolButton aria-label="Back"><Round blue size={20} /></ToolButton>
        <ToolButton aria-label="Forward"><Round flip size={20} /></ToolButton>
        <AddressBar>
          <SiteGlobe />
          {['PTMKPDEVDAD', 'Sites', 'Default Web Site'].map((p) => (
            <React.Fragment key={p}><Arrow dir="right" size={6} /><span>{p}</span></React.Fragment>
          ))}
          <Arrow dir="right" size={6} />
        </AddressBar>
        <NavTools>
          <ToolButton aria-label="Refresh"><RefreshIcon /></ToolButton>
          <ToolButton aria-label="Stop"><StopIcon /></ToolButton>
          <ToolButton aria-label="Home"><HomeIcon /></ToolButton>
          <Divider />
        </NavTools>
        <ToolButton aria-label="Help"><HelpIcon size={13} /></ToolButton>
        <NavTools><Arrow size={4} /></NavTools>
      </NavBar>
      <IisMenuBar>
        {['File', 'View', 'Help'].map((m) => <MenuItem key={m}>{m}</MenuItem>)}
      </IisMenuBar>
      <IisBody>
        <Connections />
        <Pane>
          <Features>
            <FeaturesHead>
              <Globe size={23} />
              <PageTitle>Default Web Site Home</PageTitle>
            </FeaturesHead>
            <FilterBar>Filter:</FilterBar>
            <FeatureArea>
              <FeatureList>
                <GroupTitle>ASP.NET</GroupTitle>
                <FeatureGrid>
                  {features.map(([name, Icon]) => <Feature key={name}><Icon />{name}</Feature>)}
                </FeatureGrid>
                <GroupTitle>IIS</GroupTitle>
                <FeatureGrid>
                  {peeks.map((kind, i) => <Feature key={i} aria-label={kind}><PeekIcon kind={kind} /></Feature>)}
                </FeatureGrid>
              </FeatureList>
              <Scroll />
            </FeatureArea>
          </Features>
          <ViewTabs>
            <ViewTab $active={view === 'features'} onClick={() => setView('features')}><GridIcon />Features View</ViewTab>
            <ViewTab $active={view === 'content'} onClick={() => setView('content')}><ContentIcon />Content View</ViewTab>
          </ViewTabs>
        </Pane>
        <Actions />
      </IisBody>
      <IisStatus>
        <span>Ready</span>
        <StatusIcons><ServerGlobe size={12} /><Grip /></StatusIcons>
      </IisStatus>
    </Window>
  )
}

const AddApplication = () => (
  <Window as="form" $x={298} $y={163} $w={337} $h={233} onSubmit={(e) => e.preventDefault()}>
    <Title text="Add Application" dialog />
    <DialogBody>
      <InfoBox>
        <dt>Site name:</dt><dd>Default Web Site</dd>
        <dt>Path:</dt><dd>/</dd>
      </InfoBox>
      <AliasGrid>
        <FieldLabel htmlFor="alias">Alias:</FieldLabel>
        <FieldLabel htmlFor="pool">Application pool:</FieldLabel>
        <span />
        <TextBox id="alias" />
        <TextBox id="pool" readOnly value="Default Web Site" />
        <PushButton type="button" $primary $w={64}>Select...</PushButton>
      </AliasGrid>
      <Hint as="span">Example: sales</Hint>
      <FieldLabel htmlFor="path">Physical path:</FieldLabel>
      <PathRow>
        <TextBox id="path" />
        <PushButton type="button" $w={21}>...</PushButton>
      </PathRow>
      <FieldLabel as="span">Pass-through authentication</FieldLabel>
      <ButtonRow>
        <PushButton type="button" $w={62}>Connect as...</PushButton>
        <PushButton type="button" $w={70} disabled>Test Settings...</PushButton>
      </ButtonRow>
      <ButtonRow $end>
        <PushButton disabled>OK</PushButton>
        <PushButton type="button">Cancel</PushButton>
      </ButtonRow>
    </DialogBody>
  </Window>
)

const SelectPool = () => {
  const [pool, setPool] = useState('Default Web Site')
  return (
    <Window as="form" $x={664} $y={163} $w={212} $h={147} onSubmit={(e) => e.preventDefault()}>
      <Title text="Select Application Pool" dialog active />
      <PoolBody>
        <FieldLabel htmlFor="pools">Application pool:</FieldLabel>
        <Combo>
          <ComboSelect id="pools" value={pool} onChange={(e) => setPool(e.target.value)}>
            <option>Default Web Site</option>
          </ComboSelect>
          <ComboArrow><Arrow size={6} /></ComboArrow>
        </Combo>
        <FieldLabel as="span">Properties:</FieldLabel>
        <PoolInfo>
          <div>.Net Framework Version: 2.0</div>
          <div>Pipeline mode: Integrated</div>
        </PoolInfo>
        <ButtonRow $end>
          <PushButton $primary>OK</PushButton>
          <PushButton type="button">Cancel</PushButton>
        </ButtonRow>
      </PoolBody>
    </Window>
  )
}

const App = () => {
  return (
    <ThemeProvider theme={theme}>
      <GlobalStyle />
      <Screen>
        <Desktop>
          <Shortcuts>
            {shortcuts.map(([icon, name]) => (
              <Shortcut key={icon}>
                <ShortcutIcon><svg width="36" height="36" viewBox="0 0 38 36">{drawings[icon]}</svg></ShortcutIcon>
                {name}
              </Shortcut>
            ))}
          </Shortcuts>
          <ServerManager />
          <Explorer />
          <IisManager />
          <AddApplication />
          <SelectPool />
          <Ticker>
            <TickerLogo />
            <span>durkan diri sebagai Anggota Dewan Komisaris PT Pertamina (Persero) per tanggal 28 Oktober 2014 pasca dilantik menjad</span>
          </Ticker>
        </Desktop>
        <TaskBar>
          <StartButton><StartFlag />Start</StartButton>
          <TaskButton aria-label="Server Manager"><ServerTask /></TaskButton>
          <TaskButton $flat aria-label="PowerShell"><PowerShell /></TaskButton>
          <TaskButton aria-label="Explorer"><ExplorerTask /></TaskButton>
          <TaskButton aria-label="Internet Explorer"><IeTask /></TaskButton>
          <TaskButton $pressed aria-label="IIS Manager"><IisTask /></TaskButton>
          <Tray>
            <Chevrons />
            <FlagIcon />
            <NetIcon />
            <MuteIcon />
            <Clock>3:09 PM<br />11/11/2014</Clock>
            <ShowDesktop />
          </Tray>
        </TaskBar>
      </Screen>
    </ThemeProvider>
  )
}

export default App
